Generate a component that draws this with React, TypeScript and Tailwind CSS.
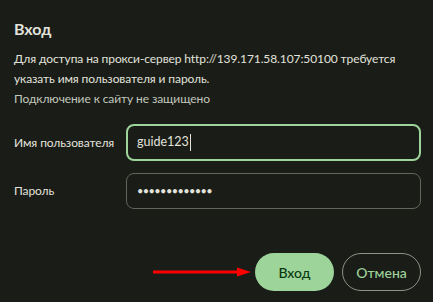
import React from 'react';

const font = { fontFamily: 'Lato, "Noto Sans", sans-serif' };

export default function App() {
  return (
    <div className="w-[433px] h-[302px] bg-[#1a1c18] text-[#e2e3dc] overflow-hidden" style={font}>
      <div className="pl-[14px] pr-[12px] pt-[18px]">
        <h1 className="text-[16px] font-bold leading-[22px] text-[#e2e3dc]">Вход</h1>
        <p className="mt-[9px] text-[12px] tracking-[-0.1px] leading-[20px] text-[#e2e3dc]">
          Для доступа на прокси-сервер http://139.171.58.107:50100 требуется указать имя пользователя и пароль.
        </p>
        <p className="text-[12px] tracking-[-0.1px] leading-[20px] text-[#c2c8bc]">Подключение к сайту не защищено</p>

        <div className="mt-[15px] flex flex-col gap-[12px]">
          <div className="flex items-center">
            <label className="whitespace-nowrap text-[12px] tracking-[-0.1px]">Имя пользователя</label>
            <div className="ml-auto w-[295px] h-[37px] rounded-[8px] border-2 border-[#9dd49a] flex items-center px-[9px]">
              <span className="text-[12.5px] text-[#e2e3dc]">guide123</span>
              <span className="ml-[1px] w-px h-[17px] bg-[#e2e3dc]" />
            </div>
          </div>
          <div className="flex items-center">
            <label className="whitespace-nowrap text-[12px] tracking-[-0.1px]">Пароль</label>
            <div className="ml-auto w-[295px] h-[36px] rounded-[8px] border border-[#5f665b] flex items-center px-[10px]">
              <span className="text-[11px] tracking-[-0.6px] text-[#e2e3dc]">•••••••••••••</span>
            </div>
          </div>
        </div>

        <div className="mt-[44px] flex items-center justify-end gap-[8px]">
          <svg width="98" height="12" viewBox="0 0 98 12" className="-mr-[4px]">
            <line x1="0" y1="6" x2="86" y2="6" stroke="#ff0000" strokeWidth="3" />
            <polygon points="84,1.5 98,6 84,10.5" fill="#ff0000" />
          </svg>
          <button className="w-[79px] h-[38px] rounded-full bg-[#9dd49a] text-[#0a3910] text-[14px] font-medium">
            Вход
          </button>
          <button className="w-[79px] h-[38px] rounded-full border border-[#8c9388] text-[#9dd49a] text-[14px] font-medium">
            Отмена
          </button>
        </div>
      </div>
    </div>
  );
}
